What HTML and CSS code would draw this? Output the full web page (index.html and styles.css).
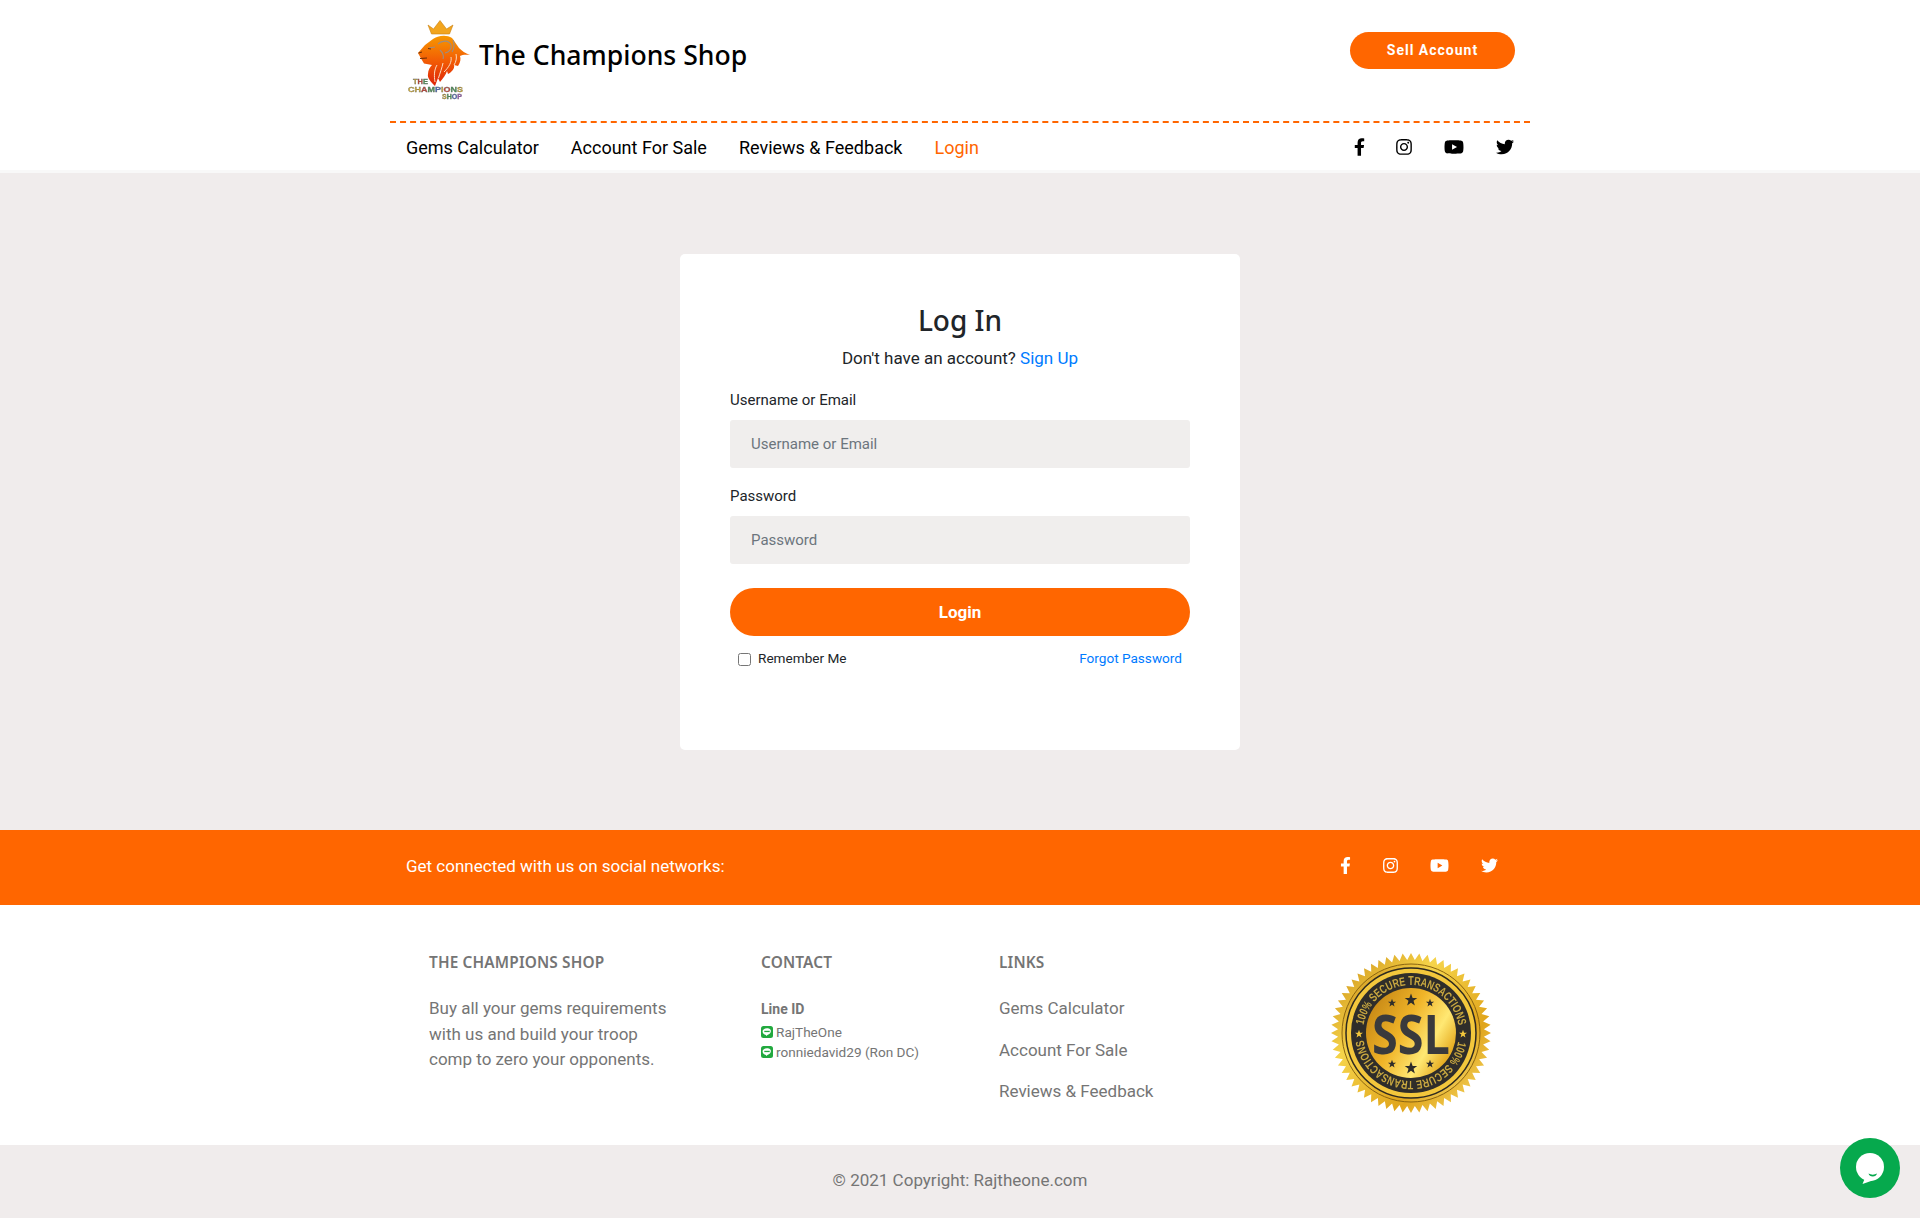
FILE: index.html
```html
<!DOCTYPE html>
<html lang="en">

<head>
    <meta charset="UTF-8">
    <meta name="viewport" content="width=device-width, initial-scale=1.0">
    <title>The Champions Shop - Login</title>
    <link rel="stylesheet" href="styles.css">
</head>

<body>

    <svg class="icon-defs" aria-hidden="true">
        <symbol id="i-facebook" viewBox="0 0 320 512">
            <path d="M279.14 288l14.22-92.66h-88.91v-60.13c0-25.35 12.42-50.06 52.24-50.06h40.42V6.26S260.43 0 225.36 0c-73.22 0-121.08 44.38-121.08 124.72v70.62H22.89V288h81.39v224h100.17V288z" />
        </symbol>
        <symbol id="i-instagram" viewBox="0 0 448 512">
            <path d="M224.1 141c-63.6 0-114.9 51.3-114.9 114.9s51.3 114.9 114.9 114.9S339 319.5 339 255.9 287.7 141 224.1 141zm0 189.6c-41.1 0-74.7-33.5-74.7-74.7s33.5-74.7 74.7-74.7 74.7 33.5 74.7 74.7-33.6 74.7-74.7 74.7zm146.4-194.3c0 14.9-12 26.8-26.8 26.8-14.9 0-26.8-12-26.8-26.8s12-26.8 26.8-26.8 26.8 12 26.8 26.8zm76.1 27.2c-1.7-35.9-9.9-67.7-36.2-93.9-26.2-26.2-58-34.4-93.9-36.2-37-2.1-147.9-2.1-184.9 0-35.8 1.7-67.6 9.9-93.9 36.1s-34.4 58-36.2 93.9c-2.1 37-2.1 147.9 0 184.9 1.7 35.9 9.9 67.7 36.2 93.9s58 34.4 93.9 36.2c37 2.1 147.9 2.1 184.9 0 35.9-1.7 67.7-9.9 93.9-36.2 26.2-26.2 34.4-58 36.2-93.9 2.1-37 2.1-147.8 0-184.8zM398.8 388c-7.8 19.6-22.9 34.7-42.6 42.6-29.5 11.7-99.5 9-132.1 9s-102.7 2.6-132.1-9c-19.6-7.8-34.7-22.9-42.6-42.6-11.7-29.5-9-99.5-9-132.1s-2.6-102.7 9-132.1c7.8-19.6 22.9-34.7 42.6-42.6 29.5-11.7 99.5-9 132.1-9s102.7-2.6 132.1 9c19.6 7.8 34.7 22.9 42.6 42.6 11.7 29.5 9 99.5 9 132.1s2.7 102.7-9 132.1z" />
        </symbol>
        <symbol id="i-youtube" viewBox="0 0 576 512">
            <path d="M549.655 124.083c-6.281-23.65-24.787-42.276-48.284-48.597C458.781 64 288 64 288 64S117.22 64 74.629 75.486c-23.497 6.322-42.003 24.947-48.284 48.597-11.412 42.867-11.412 132.305-11.412 132.305s0 89.438 11.412 132.305c6.281 23.65 24.787 41.5 48.284 47.821C117.22 448 288 448 288 448s170.78 0 213.371-11.486c23.497-6.321 42.003-24.171 48.284-47.821 11.412-42.867 11.412-132.305 11.412-132.305s0-89.438-11.412-132.305zm-317.51 213.508V175.185l142.739 81.205-142.739 81.201z" />
        </symbol>
        <symbol id="i-twitter" viewBox="0 0 512 512">
            <path d="M459.37 151.716c.325 4.548.325 9.097.325 13.645 0 138.72-105.583 298.558-298.558 298.558-59.452 0-114.68-17.219-161.137-47.106 8.447.974 16.568 1.299 25.34 1.299 49.055 0 94.213-16.568 130.274-44.832-46.132-.975-84.792-31.188-98.112-72.772 6.498.974 12.995 1.624 19.818 1.624 9.421 0 18.843-1.3 27.614-3.573-48.081-9.747-84.143-51.98-84.143-102.985v-1.299c13.969 7.797 30.214 12.67 47.431 13.319-28.264-18.843-46.781-51.005-46.781-87.391 0-19.492 5.197-37.36 14.294-52.954 51.655 63.675 129.3 105.258 216.365 109.807-1.624-7.797-2.599-15.918-2.599-24.04 0-57.828 46.782-104.934 104.934-104.934 30.213 0 57.502 12.67 76.67 33.137 23.715-4.548 46.456-13.32 66.599-25.34-7.798 24.366-24.366 44.833-46.132 57.827 21.117-2.273 41.584-8.122 60.426-16.243-14.292 20.791-32.161 39.308-52.628 54.253z" />
        </symbol>
        <symbol id="i-line" viewBox="0 0 12 12">
            <rect width="12" height="12" rx="2.5" fill="#22a93f" />
            <path d="M6 2.2c-2.5 0-4.4 1.5-4.4 3.4 0 1.6 1.4 3 3.3 3.3l.3 1 1.6-1.1c1.600-.4 3-1.700 3-3.200C10.400 3.700 8.500 2.200 6 2.200z" fill="#fff" />
            <rect x="3.300" y="4.800" width="5.400" height="1.300" fill="#22a93f" />
        </symbol>
        <linearGradient id="lion-fill" x1="0" y1="0" x2="0" y2="1">
            <stop offset="0" stop-color="#f79800" />
            <stop offset="0.5" stop-color="#f25c05" />
            <stop offset="1" stop-color="#de2208" />
        </linearGradient>
        <linearGradient id="seal-rim" x1="0" y1="0" x2="1" y2="1">
            <stop offset="0" stop-color="#c98a12" />
            <stop offset="0.35" stop-color="#f6d44a" />
            <stop offset="0.7" stop-color="#e0a51c" />
            <stop offset="1" stop-color="#fbe271" />
        </linearGradient>
        <linearGradient id="seal-face" x1="0" y1="0" x2="1" y2="0.6">
            <stop offset="0" stop-color="#b97a10" />
            <stop offset="0.5" stop-color="#f0b428" />
            <stop offset="0.8" stop-color="#ffe873" />
            <stop offset="1" stop-color="#e7ae24" />
        </linearGradient>
    </svg>

    <header class="site-header">
        <div class="container">
            <div class="brand-row">
                <a class="brand" href="#">
                    <svg class="brand-logo" viewBox="0 0 64 80" width="64" height="80">
                        <path d="M21 5l5.500 4 6.500-8.500 6.500 8.500 6.500-4-3.500 9h-18z" fill="#f2a51e" stroke="#c97f10" stroke-width=".6" />
                        <path d="M26 19C30 16 39 14 45 18C48 22 50 25 52 28C55 31 58 33 63 35C58 34.500 55 35 53 36C54 39 53.500 42 51 46L47 45C48 48 45 52 41 54L40 51C39 55 36 58 33 62L31 58L28 66C24 62 20 58 21 54C21 50 23 47 25 45L17 43.500L14 38.500L11 33L18 25Z" fill="url(#lion-fill)" />
                        <path d="M30 45C27 50 27 56 28 62M36 43C35 48 33 53 31.500 58M44 37C45 42 42 47 37 52M49 34C50 38 49 42 47 45" fill="none" stroke="#fbdcc0" stroke-width="1" />
                        <path d="M31 24C35 20 42 20 44 25C45 29 42 32 38 33M28 27L22 28M33 30C36 33 37 36 36 39M46 20C48 25 47 29 45 32" fill="none" stroke="#9c8d84" stroke-width="1.100" />
                        <path d="M13 38.500L20 38M11.500 33L15 32M21 28.500L24 29" fill="none" stroke="#6a2c08" stroke-width="1" />
                        <text class="logo-word" x="6" y="64" font-size="6.500" textLength="15" lengthAdjust="spacingAndGlyphs"><tspan fill="#d8b02a">T</tspan><tspan fill="#d23c2c">H</tspan><tspan fill="#3a9a48">E</tspan></text>
                        <text class="logo-word" x="1" y="72" font-size="7.500" textLength="55" lengthAdjust="spacingAndGlyphs"><tspan fill="#e3b92c">C</tspan><tspan fill="#e3b92c">H</tspan><tspan fill="#d23c2c">A</tspan><tspan fill="#3a9a48">M</tspan><tspan fill="#3f66c8">P</tspan><tspan fill="#e3b92c">I</tspan><tspan fill="#d23c2c">O</tspan><tspan fill="#3a9a48">N</tspan><tspan fill="#e3b92c">S</tspan></text>
                        <text class="logo-word" x="35" y="79" font-size="6.500" textLength="20" lengthAdjust="spacingAndGlyphs"><tspan fill="#e3b92c">S</tspan><tspan fill="#3a9a48">H</tspan><tspan fill="#3f66c8">O</tspan><tspan fill="#a04fc0">P</tspan></text>
                    </svg>
                    <span class="brand-name">The Champions Shop</span>
                </a>
                <a class="sell-btn" href="#">Sell Account</a>
            </div>
            <nav class="main-nav">
                <ul class="nav-links">
                    <li><a href="#">Gems Calculator</a></li>
                    <li><a href="#">Account For Sale</a></li>
                    <li><a href="#">Reviews &amp; Feedback</a></li>
                    <li><a class="active" href="#">Login</a></li>
                </ul>
                <div class="nav-social">
                    <svg class="ico ico-f"><use href="#i-facebook" /></svg>
                    <svg class="ico ico-i"><use href="#i-instagram" /></svg>
                    <svg class="ico ico-y"><use href="#i-youtube" /></svg>
                    <svg class="ico ico-t"><use href="#i-twitter" /></svg>
                </div>
            </nav>
        </div>
    </header>

    <main class="login-section">
        <form class="login-card">
            <h1>Log In</h1>
            <p class="signup-line">Don't have an account? <a href="#">Sign Up</a></p>
            <div class="field">
                <label for="username">Username or Email</label>
                <input type="text" id="username" placeholder="Username or Email">
            </div>
            <div class="field">
                <label for="password">Password</label>
                <input type="password" id="password" placeholder="Password">
            </div>
            <button type="button" class="login-btn">Login</button>
            <div class="login-extra">
                <label class="remember"><input type="checkbox"> Remember Me</label>
                <a href="#">Forgot Password</a>
            </div>
        </form>
    </main>

    <section class="social-bar">
        <div class="container social-inner">
            <span>Get connected with us on social networks:</span>
            <div class="bar-social">
                <svg class="ico ico-f"><use href="#i-facebook" /></svg>
                <svg class="ico ico-i"><use href="#i-instagram" /></svg>
                <svg class="ico ico-y"><use href="#i-youtube" /></svg>
                <svg class="ico ico-t"><use href="#i-twitter" /></svg>
            </div>
        </div>
    </section>

    <footer class="site-footer">
        <div class="container footer-cols">
            <div class="col-about">
                <h6>The Champions Shop</h6>
                <p>Buy all your gems requirements with us and build your troop comp to zero your opponents.</p>
            </div>
            <div class="col-contact">
                <h6>Contact</h6>
                <p class="line-title">Line ID</p>
                <p class="line-id"><svg class="line-ico"><use href="#i-line" /></svg>RajTheOne</p>
                <p class="line-id"><svg class="line-ico"><use href="#i-line" /></svg>ronniedavid29 (Ron DC)</p>
            </div>
            <div class="col-links">
                <h6>Links</h6>
                <a href="#">Gems Calculator</a>
                <a href="#">Account For Sale</a>
                <a href="#">Reviews &amp; Feedback</a>
            </div>
            <svg class="ssl-seal" viewBox="0 0 160 160" width="160" height="160">
                <defs>
                    <path id="seal-arc" d="M32 80a48 48 0 1 1 96 0a48 48 0 1 1-96 0" />
                    <polygon id="seal-star" points="0,-6 1.500,-1.900 5.700,-1.900 2.300,.7 3.500,4.900 0,2.400 -3.500,4.900 -2.300,.7 -5.700,-1.900 -1.500,-1.900" />
                </defs>
                <polygon id="seal-teeth" fill="url(#seal-rim)" />
                <circle cx="80" cy="80" r="69" fill="url(#seal-rim)" stroke="#8a6410" stroke-width="1" />
                <circle cx="80" cy="80" r="65" fill="#f3c73c" stroke="#2e2a20" stroke-width="1.500" />
                <circle cx="80" cy="80" r="60" fill="#2f2d2a" />
                <circle cx="80" cy="80" r="45" fill="url(#seal-face)" />
                <text class="seal-ring"><textPath href="#seal-arc" startOffset="8" textLength="135" lengthAdjust="spacingAndGlyphs">100% SECURE TRANSACTIONS</textPath></text>
                <text class="seal-ring"><textPath href="#seal-arc" startOffset="159" textLength="135" lengthAdjust="spacingAndGlyphs">100% SECURE TRANSACTIONS</textPath></text>
                <text class="seal-ssl" x="80" y="101" textLength="78" lengthAdjust="spacingAndGlyphs">SSL</text>
                <g fill="#2f2d2a">
                    <use href="#seal-star" transform="translate(80 47) scale(1.100)" />
                    <use href="#seal-star" transform="translate(61 50) scale(.72)" />
                    <use href="#seal-star" transform="translate(99 50) scale(.72)" />
                    <use href="#seal-star" transform="translate(80 115) scale(1.100)" />
                    <use href="#seal-star" transform="translate(61 111) scale(.72)" />
                    <use href="#seal-star" transform="translate(99 111) scale(.72)" />
                </g>
                <g fill="#f3c73c">
                    <use href="#seal-star" transform="translate(28 81) scale(.7)" />
                    <use href="#seal-star" transform="translate(132 81) scale(.7)" />
                </g>
            </svg>
        </div>
    </footer>

    <div class="copyright">© 2021 Copyright: Rajtheone.com</div>

    <a class="chat-btn" href="#">
        <svg viewBox="0 0 60 60" width="60" height="60">
            <circle cx="30" cy="30" r="30" fill="#06a94d" />
            <circle cx="30" cy="29" r="14" fill="#fff" />
            <path d="M25 40l-2.500 6 10-3.500z" fill="#fff" />
            <path d="M28.500 35.500c2.500 1.500 6 1.500 8.500 0-.5 2-2 3-4.200 3s-3.800-1-4.300-3z" fill="#06a94d" />
        </svg>
    </a>

    <script>
        // saw-tooth rim of the seal
        const teeth = [];
        for (let i = 0; i < 120; i++) {
            const r = i % 2 === 0 ? 80 : 73;
            const a = i * Math.PI / 60;
            teeth.push((80 + r * Math.cos(a)).toFixed(2) + ',' + (80 + r * Math.sin(a)).toFixed(2));
        }
        document.getElementById('seal-teeth').setAttribute('points', teeth.join(' '));
    </script>

</body>

</html>
```

FILE: styles.css
```css
* {
    box-sizing: border-box;
}

body {
    margin: 0;
    font-family: Roboto, "Liberation Sans", sans-serif;
    font-size: 17px;
    color: #212529;
    background-color: #fff;
}

a {
    text-decoration: none;
}

.icon-defs {
    position: absolute;
    width: 0;
    height: 0;
}

.container {
    width: 1140px;
    margin: 0 auto;
}

/* header */
.site-header {
    border-bottom: 3px solid #f8f8f8;
}

.brand-row {
    display: flex;
    justify-content: space-between;
    height: 123px;
    padding: 20px 15px 0 17px;
    border-bottom: 2px dashed #ff6600;
}

.brand {
    display: flex;
    align-items: flex-start;
    color: #000;
}

.brand-logo {
    display: block;
    filter: blur(.3px);
}

.logo-word {
    font-family: "Liberation Sans", sans-serif;
    font-weight: 700;
    stroke: #666;
    stroke-width: .3;
}

.brand-name {
    margin: 17px 0 0 8px;
    font-family: "Noto Sans", sans-serif;
    font-weight: 500;
    font-size: 26.6px;
    line-height: 36px;
}

.sell-btn {
    width: 165px;
    height: 37px;
    margin-top: 12px;
    border-radius: 19px;
    background-color: #ff6600;
    color: #fff;
    font-size: 14px;
    font-weight: 700;
    letter-spacing: 1px;
    line-height: 37px;
    text-align: center;
}

.main-nav {
    display: flex;
    justify-content: space-between;
    align-items: center;
    height: 47px;
    padding: 0 16px;
}

.nav-links {
    display: flex;
    gap: 32px;
    margin: 2px 0 0;
    padding: 0;
    list-style: none;
    font-size: 18px;
}

.nav-links a {
    color: #000;
}

.nav-links a.active {
    color: #ff6600;
}

.ico {
    display: block;
    fill: currentColor;
}

.nav-social {
    display: flex;
    align-items: center;
    gap: 32px;
    color: #000;
}

.nav-social .ico {
    height: 18px;
}

.nav-social .ico-f {
    width: 11px;
    margin-right: -1px;
}

.nav-social .ico-i {
    width: 16px;
}

.nav-social .ico-y {
    width: 20px;
}

.nav-social .ico-t {
    width: 18px;
}

/* login card */
.login-section {
    padding: 81px 0 80px;
    background-color: #f0ecec;
}

.login-card {
    width: 560px;
    height: 496px;
    margin: 0 auto;
    padding: 48px 50px 0;
    border-radius: 5px;
    background-color: #fff;
}

.login-card h1 {
    margin: 0;
    font-family: "Noto Sans", sans-serif;
    font-size: 28px;
    font-weight: 500;
    line-height: 36px;
    text-align: center;
}

.signup-line {
    margin: 8px 0 0;
    line-height: 24px;
    text-align: center;
}

.signup-line a,
.login-extra a {
    color: #007bff;
}

.field {
    margin-top: 19px;
}

.field + .field {
    margin-top: 17px;
}

.field label {
    display: block;
    margin-bottom: 9px;
    font-size: 15px;
    line-height: 22px;
}

.field input {
    display: block;
    width: 100%;
    height: 48px;
    padding: 0 21px;
    border: 0;
    border-radius: 3px;
    background-color: #f0eeed;
    font-family: Roboto, sans-serif;
    font-size: 15px;
    color: #495057;
}

.field input::placeholder {
    color: #6c757d;
    opacity: 1;
}

.login-btn {
    display: block;
    width: 100%;
    height: 48px;
    margin-top: 24px;
    border: 0;
    border-radius: 24px;
    background-color: #ff6600;
    color: #fff;
    font-family: Roboto, sans-serif;
    font-size: 17px;
    font-weight: 700;
}

.login-extra {
    display: flex;
    justify-content: space-between;
    align-items: center;
    margin-top: 12px;
    padding: 0 8px;
    font-size: 13.6px;
    line-height: 20px;
}

.remember {
    display: flex;
    align-items: center;
}

.remember input {
    width: 13px;
    height: 13px;
    margin: 2px 7px 0 0;
}

/* social bar */
.social-bar {
    height: 75px;
    background-color: #ff6600;
    color: #fff;
}

.social-inner {
    display: flex;
    justify-content: space-between;
    align-items: center;
    height: 100%;
    padding: 0 32px 4px 16px;
}

.bar-social {
    display: flex;
    align-items: center;
    gap: 32px;
}

.bar-social .ico {
    height: 17px;
}

.bar-social .ico-f {
    width: 11px;
}

.bar-social .ico-i {
    width: 15px;
}

.bar-social .ico-y {
    width: 19px;
}

.bar-social .ico-t {
    width: 17px;
}

/* footer */
.site-footer {
    height: 240px;
    color: #757575;
}

.footer-cols {
    display: flex;
    align-items: flex-start;
    padding: 48px 0 0 39px;
}

.site-footer h6 {
    margin: 0 0 23px;
    font-family: "Noto Sans", sans-serif;
    font-size: 15.4px;
    font-weight: 600;
    letter-spacing: .15px;
    line-height: 20px;
    text-transform: uppercase;
}

.col-about {
    width: 332px;
}

.col-about p {
    width: 250px;
    margin: 0;
    line-height: 25.6px;
}

.col-contact {
    width: 238px;
    font-size: 13.6px;
}

.col-contact p {
    margin: 0;
}

.line-title {
    font-size: 14px;
    font-weight: 700;
    line-height: 20px;
    padding: 3px 0;
}

.line-id {
    display: flex;
    align-items: center;
    height: 20px;
}

.line-ico {
    width: 12px;
    height: 12px;
    margin-right: 3px;
}

.col-links {
    display: flex;
    flex-direction: column;
    width: 332px;
    align-items: flex-start;
    gap: 16px;
}

.site-footer .col-links h6 {
    margin-bottom: 7px;
}

.col-links a {
    color: #757575;
    line-height: 25.6px;
}

.ssl-seal {
    display: block;
    filter: blur(.3px);
}

.seal-ring {
    font-family: "Liberation Sans", sans-serif;
    font-size: 12px;
    font-weight: 700;
    fill: #c9a840;
}

.seal-ssl {
    font-family: "Open Sans", sans-serif;
    font-size: 54px;
    font-weight: 700;
    fill: #3a3a3c;
    text-anchor: middle;
}

.copyright {
    height: 73px;
    background-color: #f0ecec;
    color: #757575;
    line-height: 71px;
    text-align: center;
}

.chat-btn {
    position: fixed;
    right: 20px;
    bottom: 20px;
    width: 60px;
    height: 60px;
}
```
